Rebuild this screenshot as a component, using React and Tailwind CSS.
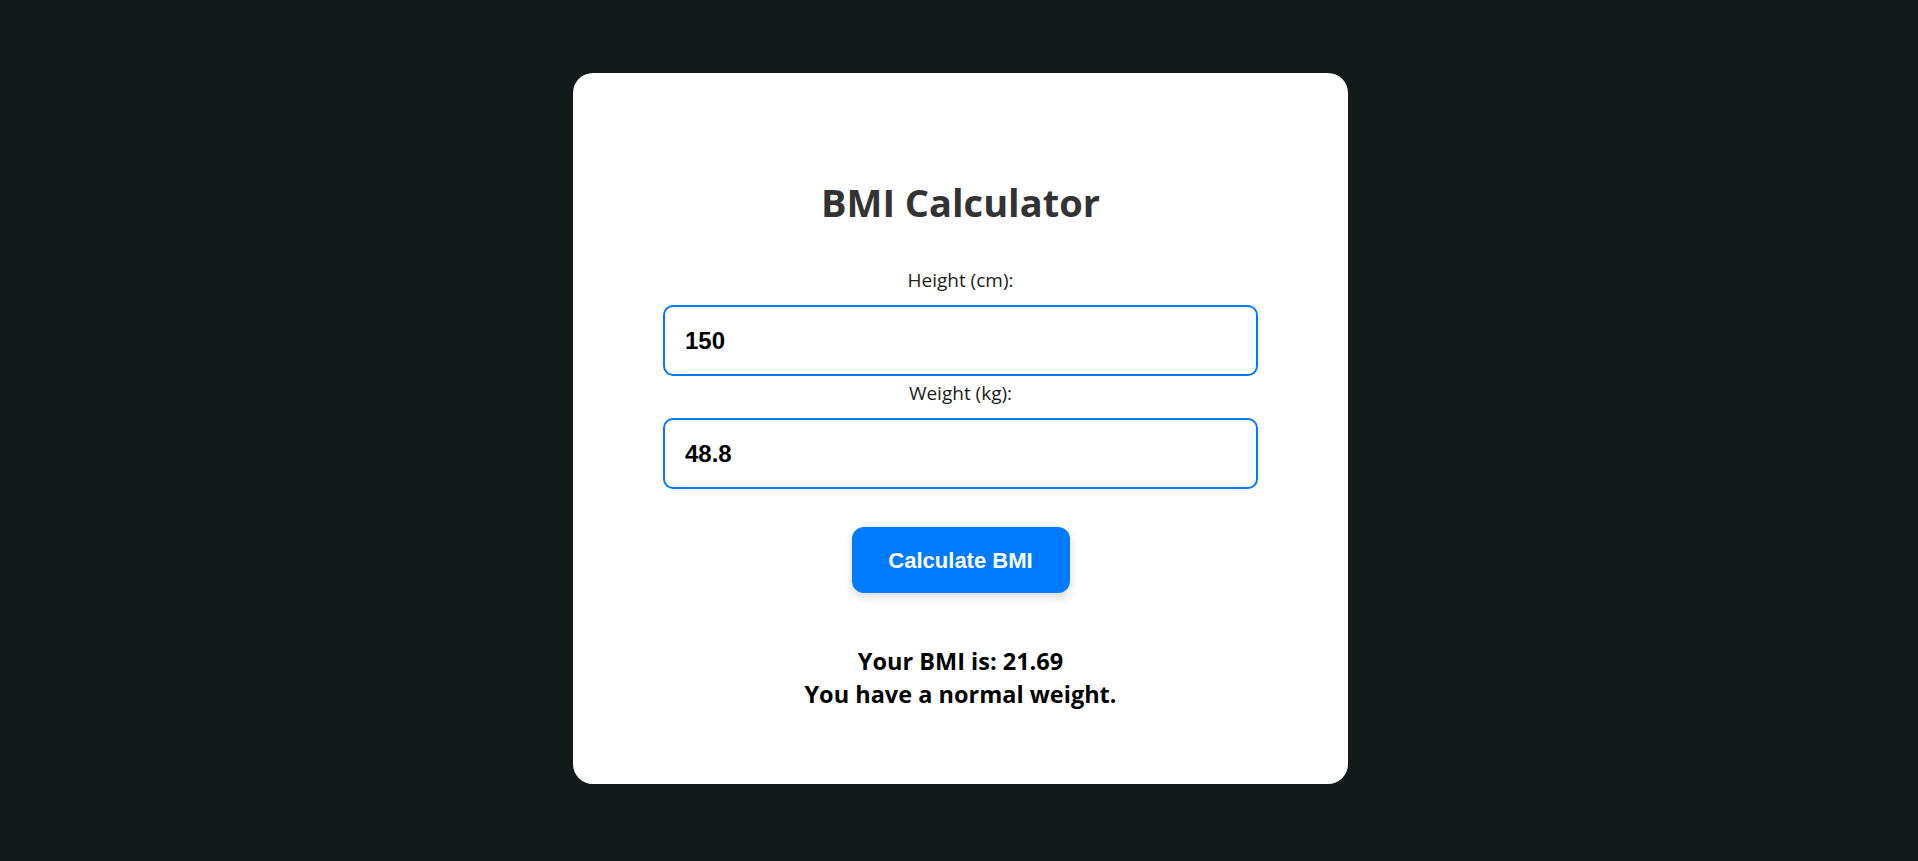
import { useState } from 'react'

const SEGOE = "font-['Open_Sans','Noto_Sans',sans-serif]"
const ARIAL = "font-['Liberation_Sans',Arial,sans-serif]"

function Field({ label, value, onChange, gap }) {
  return (
    <div className={`flex flex-col items-center ${gap}`}>
      <label className={`${SEGOE} text-[19px] leading-[24px] text-[#1c1c1c]`}>{label}</label>
      <input
        value={value}
        onChange={(e) => onChange(e.target.value)}
        className={`${ARIAL} mt-[13px] w-[595px] h-[71px] border-2 border-[#007bff] rounded-[10px] px-[20px] text-[24px] font-bold text-black outline-none`}
      />
    </div>
  )
}

export default function App() {
  const [height, setHeight] = useState('150')
  const [weight, setWeight] = useState('48.8')

  const h = parseFloat(height) / 100
  const w = parseFloat(weight)
  const bmi = h > 0 && w > 0 ? (w / (h * h)).toFixed(2) : null

  return (
    <div className="min-h-screen bg-[#141919] pt-[73px] pl-[3px]">
      <div className="mx-auto w-[775px] h-[711px] bg-white rounded-[20px] flex flex-col items-center pt-[103px]">
        <h1 className={`${SEGOE} text-[38px] leading-[52px] font-bold text-[#333]`}>BMI Calculator</h1>

        <Field label="Height (cm):" value={height} onChange={setHeight} gap="mt-[40px]" />
        <Field label="Weight (kg):" value={weight} onChange={setWeight} gap="mt-[5px]" />

        <button
          className={`${ARIAL} mt-[38px] w-[218px] h-[66px] rounded-[12px] bg-[#007bff] text-white text-[22px] font-bold shadow-[0_4px_10px_rgba(0,0,0,0.15)]`}
        >
          Calculate BMI
        </button>

        {bmi && (
          <div className={`${SEGOE} mt-[52px] text-center text-[23.5px] leading-[33px] font-bold text-black`}>
            <p>Your BMI is: {bmi}</p>
            <p>You have a normal weight.</p>
          </div>
        )}
      </div>
    </div>
  )
}
